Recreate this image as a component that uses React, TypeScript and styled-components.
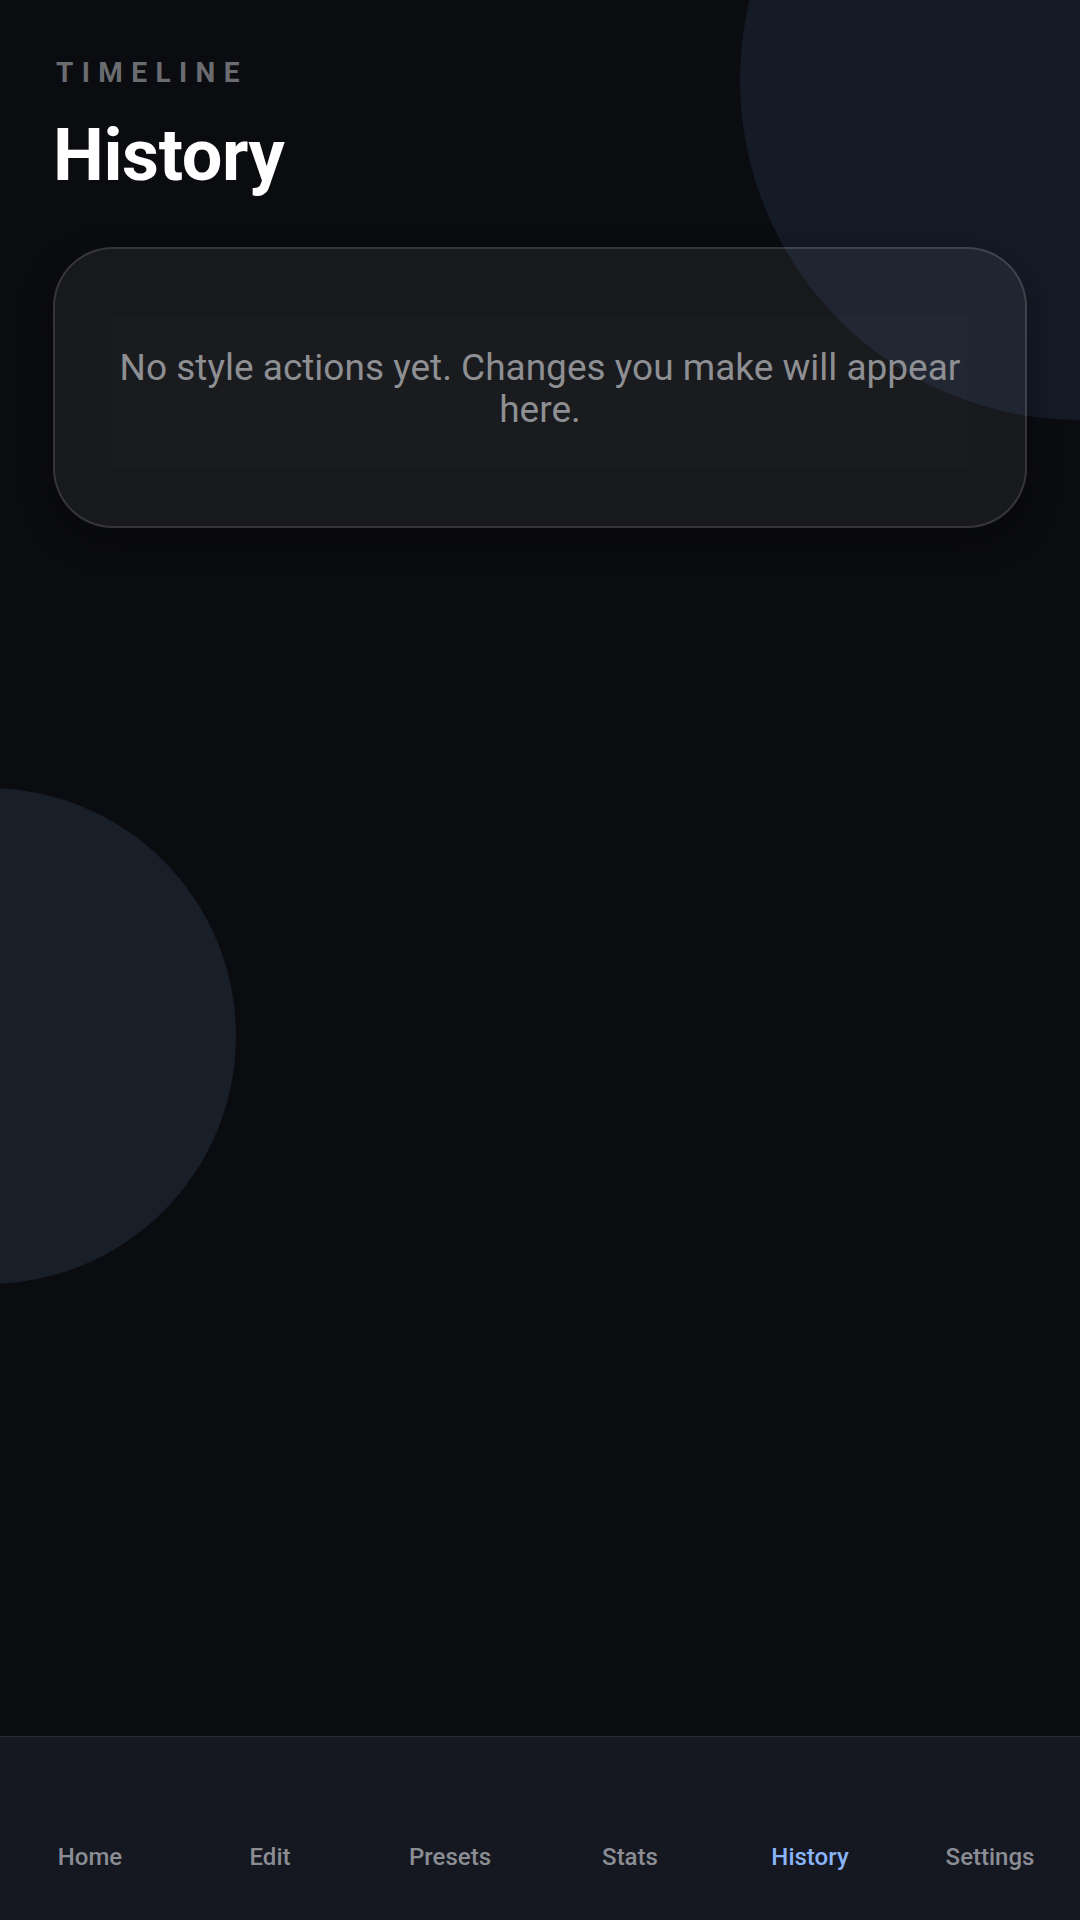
import React, {FC} from 'react';
import styled, {createGlobalStyle} from "styled-components";

const GlobalStyle = createGlobalStyle`
  html, body {
    margin: 0;
    padding: 0;
    background-color: #0b0c10;
  }
  * {
    box-sizing: border-box;
  }
`

const Screen = styled.div`
  position: relative;
  width: 1080px;
  height: 1920px;
  overflow: hidden;
  display: flex;
  flex-direction: column;
  background-color: #0b0c10;
  font-family: Roboto, "Noto Sans", "Liberation Sans", sans-serif;
`

const Blob = styled.div<{size: number, color: string}>`
  position: absolute;
  width: ${props => props.size}px;
  height: ${props => props.size}px;
  border-radius: 50%;
  background-color: ${props => props.color};
  pointer-events: none;
`

const TopBlob = styled(Blob)`
  top: -260px;
  right: -340px;
`

const SideBlob = styled(Blob)`
  top: 788px;
  left: -260px;
`

const Content = styled.main`
  position: relative;
  flex: 1;
  display: flex;
  flex-direction: column;
  padding: 59px 53px 0;
`

const Eyebrow = styled.div`
  font-size: 28px;
  line-height: 1;
  font-weight: 700;
  letter-spacing: 0.3em;
  color: #6b6c70;
  padding-left: 3px;
`

const Title = styled.h1`
  margin: 33px 0 0;
  font-size: 72px;
  line-height: 1;
  font-weight: 700;
  letter-spacing: -0.4px;
  color: #ffffff;
`

const EmptyCard = styled.section`
  margin-top: 55px;
  padding: 67px 58px 57px;
  border-radius: 60px;
  border: 2px solid rgba(255, 255, 255, 0.13);
  background-color: rgba(255, 255, 255, 0.055);
  box-shadow: 0 12px 32px rgba(0, 0, 0, 0.35);
`

const EmptyText = styled.p`
  margin: 0;
  padding: 31px 0 38px;
  background-color: rgba(255, 255, 255, 0.012);
  font-size: 37px;
  line-height: 42px;
  font-weight: 400;
  text-align: center;
  color: #8e8f93;
`

const NavBar = styled.nav`
  position: relative;
  height: 184px;
  display: grid;
  grid-template-columns: repeat(6, 1fr);
  align-items: end;
  padding-bottom: 51px;
  border-top: 1px solid #2a2d35;
  background-color: #151820;
`

const NavItem = styled.button<{active?: boolean}>`
  border: none;
  background: none;
  padding: 0;
  font-family: inherit;
  font-size: 24px;
  line-height: 1;
  font-weight: 500;
  text-align: center;
  color: ${props => props.active ? "#8ab4f8" : "#8a8d94"};
  cursor: pointer;
`

const tabs = ["Home", "Edit", "Presets", "Stats", "History", "Settings"];

const App: FC = () => (
    <Screen>
        <GlobalStyle/>
        <TopBlob size={680} color={"#141a26"}/>
        <SideBlob size={496} color={"#181f29"}/>
        <Content>
            <Eyebrow>TIMELINE</Eyebrow>
            <Title>History</Title>
            <EmptyCard>
                <EmptyText>No style actions yet. Changes you make will appear here.</EmptyText>
            </EmptyCard>
        </Content>
        <NavBar>
            {tabs.map(tab =>
                <NavItem key={tab} active={tab === "History"}>{tab}</NavItem>
            )}
        </NavBar>
    </Screen>
);

export default App;
